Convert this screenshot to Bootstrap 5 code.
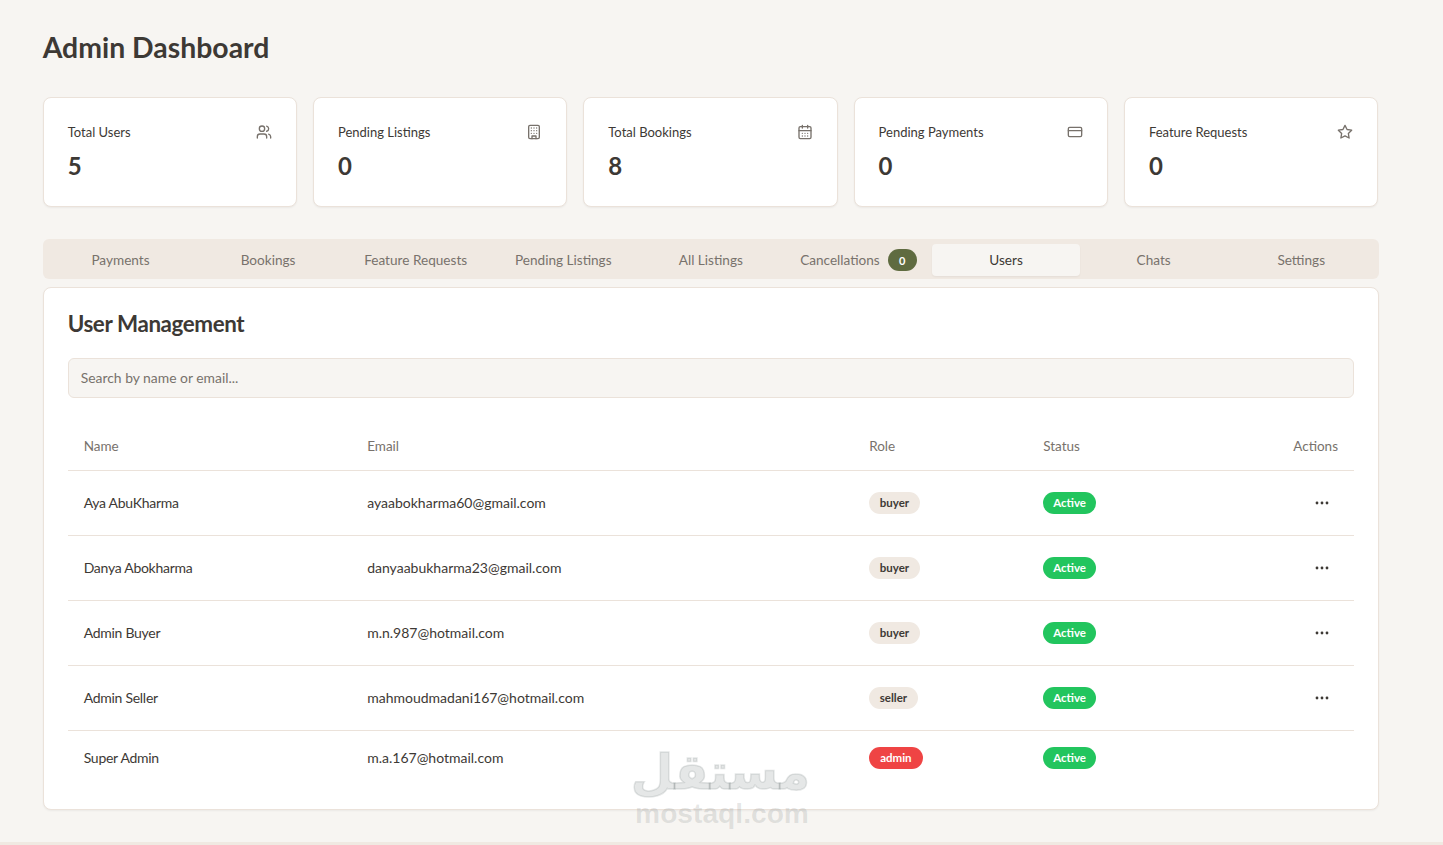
<!DOCTYPE html>
<html lang="en">
<head>
<meta charset="utf-8">
<title>Admin Dashboard</title>
<link href="https://cdn.jsdelivr.net/npm/bootstrap@5.3.0/dist/css/bootstrap.min.css" rel="stylesheet">
<style>
html,body{height:845px;overflow:hidden}
body{background:#f7f5f2;font-family:"Lato","Liberation Sans",sans-serif;color:#3d3935;font-size:14px;position:relative}
.page-wrap{padding:30px 64px 0 42.7px;height:842px}
.page-title{font-size:28.4px;font-weight:700;line-height:35px;margin:0 0 32px;color:#3d3935}
.stat-grid{display:grid;grid-template-columns:repeat(5,1fr);gap:16px;margin:0 .8px 32px 0}
.stat-card{height:110px;border:1px solid #ebe2da;border-radius:8px;box-shadow:0 1px 2px rgba(0,0,0,.05);padding:24px}
.stat-label{font-size:13px;line-height:20px;color:#3d3935}
.stat-value{font-size:24px;font-weight:700;line-height:32px;margin-top:8px;color:#3d3935}
.stat-icon{width:16px;height:16px;margin-top:2px;color:#77716b;stroke:currentColor;fill:none;stroke-width:2;stroke-linecap:round;stroke-linejoin:round}
.tab-strip{background:#f0e9e2;border-radius:6px;padding:5px 4px 3px;height:40px;margin-bottom:8px;flex-wrap:nowrap}
.tab-strip .nav-link{flex:1 1 0;height:32px;padding:0;color:#78726c;font-size:13.6px;border-radius:4px;display:flex;align-items:center;justify-content:center;gap:8px}
.tab-strip .nav-link.active{background:#f7f5f2;color:#3d3935;box-shadow:0 1px 2px rgba(0,0,0,.05)}
.tab-count{background:#5f6b40;width:29px;height:22px;font-size:11px;font-weight:700;padding:0;display:inline-flex;align-items:center;justify-content:center}
.panel-card{border:1px solid #ebe2da;border-radius:8px;box-shadow:0 1px 2px rgba(0,0,0,.05);padding:24px 24px 24px;height:523px}
.panel-title{font-size:22.4px;font-weight:700;line-height:24px;letter-spacing:-.4px;margin:0 0 22px;color:#3d3935}
.search-box{height:40px;background:#f7f5f2;border:1px solid #ebe2da;border-radius:6px;font-size:13.9px;padding:0 12px 2px;color:#3d3935;margin-bottom:24px}
.search-box::placeholder{color:#78726c;opacity:1}
.user-table{table-layout:fixed;margin:0;--bs-table-bg:transparent;--bs-table-color:#3d3935}
.user-table th{font-weight:400;color:#78726c;font-size:13.5px;height:48px;padding:0 16px;vertical-align:middle;border-bottom:1px solid #ebe2da}
.user-table td{height:65px;padding:0 16px;vertical-align:middle;font-size:14px;border-bottom:1px solid #ebe2da}
.user-table td.person-name{letter-spacing:-.28px}
.user-table tr:last-child td{height:55px;border-bottom:0}
.col-name{width:283.5px}.col-mail{width:502px}.col-role{width:174px}
.role-pill,.state-pill{height:22px;font-size:11.5px;font-weight:700;padding:0 10.6px;display:inline-flex;align-items:center}
.role-pill{background:#f0e9e2;color:#3d3935}
.role-pill.admin-pill{background:#ef4444;color:#fff;padding:0 11px}
.state-pill{background:#22c55e;color:#fff;padding:0 10px}
.more-btn{width:32px;height:32px;padding:0;border:0;background:none;color:#3d3935;display:inline-flex;align-items:center;justify-content:center}
.footer-band{position:absolute;left:0;right:0;top:842px;height:3px;background:#f0e9e2}
.mark-over{position:absolute;left:634px;top:746px;width:176px;text-align:center;pointer-events:none;color:rgba(95,105,105,.16)}
.mark-ar{font-family:"DejaVu Sans",sans-serif;font-weight:700;font-size:49px;line-height:54px;height:55px;direction:rtl;-webkit-text-stroke:1.5px rgba(95,105,105,.16)}
.mark-en{font-family:"Liberation Sans",sans-serif;font-weight:700;font-size:28.2px;line-height:25px}
</style>
</head>
<body>
<div class="page-wrap">
  <h1 class="page-title">Admin Dashboard</h1>
  <div class="stat-grid">
    <div class="card stat-card"><div class="d-flex justify-content-between align-items-start"><span class="stat-label">Total Users</span>
      <svg class="stat-icon" viewBox="0 0 24 24"><path d="M16 21v-2a4 4 0 0 0-4-4H6a4 4 0 0 0-4 4v2"/><circle cx="9" cy="7" r="4"/><path d="M22 21v-2a4 4 0 0 0-3-3.87"/><path d="M16 3.13a4 4 0 0 1 0 7.75"/></svg></div><div class="stat-value">5</div></div>
    <div class="card stat-card"><div class="d-flex justify-content-between align-items-start"><span class="stat-label">Pending Listings</span>
      <svg class="stat-icon" viewBox="0 0 24 24"><rect x="4" y="2" width="16" height="20" rx="2"/><path d="M9 22v-4h6v4"/><path d="M8 6h.01M16 6h.01M12 6h.01M12 10h.01M12 14h.01M16 10h.01M16 14h.01M8 10h.01M8 14h.01"/></svg></div><div class="stat-value">0</div></div>
    <div class="card stat-card"><div class="d-flex justify-content-between align-items-start"><span class="stat-label">Total Bookings</span>
      <svg class="stat-icon" viewBox="0 0 24 24"><path d="M8 2v4M16 2v4"/><rect x="3" y="4" width="18" height="18" rx="2"/><path d="M3 10h18"/><path d="M8 14h.01M12 14h.01M16 14h.01M8 18h.01M12 18h.01M16 18h.01"/></svg></div><div class="stat-value">8</div></div>
    <div class="card stat-card"><div class="d-flex justify-content-between align-items-start"><span class="stat-label">Pending Payments</span>
      <svg class="stat-icon" viewBox="0 0 24 24"><rect x="2" y="5" width="20" height="14" rx="2"/><path d="M2 10h20"/></svg></div><div class="stat-value">0</div></div>
    <div class="card stat-card"><div class="d-flex justify-content-between align-items-start"><span class="stat-label">Feature Requests</span>
      <svg class="stat-icon" viewBox="0 0 24 24"><path d="M12 2l3.09 6.26L22 9.27l-5 4.87 1.18 6.88L12 17.77l-6.18 3.25L7 14.14 2 9.27l6.91-1.01L12 2z"/></svg></div><div class="stat-value">0</div></div>
  </div>

  <nav class="nav tab-strip">
    <a class="nav-link" href="#">Payments</a>
    <a class="nav-link" href="#">Bookings</a>
    <a class="nav-link" href="#">Feature Requests</a>
    <a class="nav-link" href="#">Pending Listings</a>
    <a class="nav-link" href="#">All Listings</a>
    <a class="nav-link" href="#">Cancellations <span class="badge rounded-pill tab-count">0</span></a>
    <a class="nav-link active" href="#">Users</a>
    <a class="nav-link" href="#">Chats</a>
    <a class="nav-link" href="#">Settings</a>
  </nav>

  <div class="card panel-card">
    <h2 class="panel-title">User Management</h2>
    <input class="form-control search-box" type="text" placeholder="Search by name or email...">
    <table class="table user-table">
      <colgroup><col class="col-name"><col class="col-mail"><col class="col-role"><col><col></colgroup>
      <thead><tr><th>Name</th><th>Email</th><th>Role</th><th>Status</th><th class="text-end">Actions</th></tr></thead>
      <tbody>
        <tr><td class="person-name">Aya AbuKharma</td><td>ayaabokharma60@gmail.com</td><td><span class="badge rounded-pill role-pill">buyer</span></td><td><span class="badge rounded-pill state-pill">Active</span></td><td class="text-end"><button class="more-btn" type="button" aria-label="More"><svg width="16" height="16" viewBox="0 0 16 16" fill="currentColor"><circle cx="3" cy="8" r="1.4"/><circle cx="8" cy="8" r="1.4"/><circle cx="13" cy="8" r="1.4"/></svg></button></td></tr>
        <tr><td class="person-name">Danya Abokharma</td><td>danyaabukharma23@gmail.com</td><td><span class="badge rounded-pill role-pill">buyer</span></td><td><span class="badge rounded-pill state-pill">Active</span></td><td class="text-end"><button class="more-btn" type="button" aria-label="More"><svg width="16" height="16" viewBox="0 0 16 16" fill="currentColor"><circle cx="3" cy="8" r="1.4"/><circle cx="8" cy="8" r="1.4"/><circle cx="13" cy="8" r="1.4"/></svg></button></td></tr>
        <tr><td class="person-name">Admin Buyer</td><td>m.n.987@hotmail.com</td><td><span class="badge rounded-pill role-pill">buyer</span></td><td><span class="badge rounded-pill state-pill">Active</span></td><td class="text-end"><button class="more-btn" type="button" aria-label="More"><svg width="16" height="16" viewBox="0 0 16 16" fill="currentColor"><circle cx="3" cy="8" r="1.4"/><circle cx="8" cy="8" r="1.4"/><circle cx="13" cy="8" r="1.4"/></svg></button></td></tr>
        <tr><td class="person-name">Admin Seller</td><td>mahmoudmadani167@hotmail.com</td><td><span class="badge rounded-pill role-pill">seller</span></td><td><span class="badge rounded-pill state-pill">Active</span></td><td class="text-end"><button class="more-btn" type="button" aria-label="More"><svg width="16" height="16" viewBox="0 0 16 16" fill="currentColor"><circle cx="3" cy="8" r="1.4"/><circle cx="8" cy="8" r="1.4"/><circle cx="13" cy="8" r="1.4"/></svg></button></td></tr>
        <tr><td class="person-name">Super Admin</td><td>m.a.167@hotmail.com</td><td><span class="badge rounded-pill role-pill admin-pill">admin</span></td><td><span class="badge rounded-pill state-pill">Active</span></td><td></td></tr>
      </tbody>
    </table>
  </div>
</div>
<div class="footer-band"></div>
<div class="mark-over"><div class="mark-ar">مستقل</div><div class="mark-en">mostaql.com</div></div>
<script src="https://cdn.jsdelivr.net/npm/bootstrap@5.3.0/dist/js/bootstrap.bundle.min.js"></script>
</body>
</html>
